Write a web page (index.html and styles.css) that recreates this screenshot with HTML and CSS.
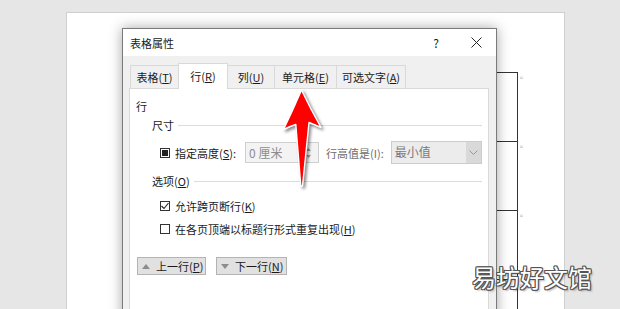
FILE: index.html
```html
<html>

<head>
  <meta name="viewport" content="width=device-width, initial-scale=1" />
  <link rel="stylesheet" href="styles.css">
  <title>表格属性</title>
</head>

<body>
  <div class="desk">
    <div class="page">
      <div class="doc-row">
        <div class="doc-cell"></div>
        <span class="row-mark">¤</span>
      </div>
      <div class="doc-row">
        <div class="doc-cell"></div>
        <span class="row-mark">¤</span>
      </div>
      <div class="doc-row">
        <div class="doc-cell"></div>
        <span class="row-mark">¤</span>
      </div>
      <div class="doc-row">
        <div class="doc-cell"></div>
        <span class="row-mark">¤</span>
      </div>
    </div>

    <div class="dialog">
      <div class="titlebar">
        <span class="title">表格属性</span>
        <span class="title-btn">?</span>
        <span class="title-btn">
          <svg width="11" height="11" viewBox="0 0 11 11">
            <path d="M0.5 0.5 L10.5 10.5 M10.5 0.5 L0.5 10.5" stroke="#222" stroke-width="1" fill="none" />
          </svg>
        </span>
      </div>

      <div class="tabs">
        <div class="tab">表格(<u>T</u>)</div>
        <div class="tab active">行(<u>R</u>)</div>
        <div class="tab">列(<u>U</u>)</div>
        <div class="tab">单元格(<u>E</u>)</div>
        <div class="tab">可选文字(<u>A</u>)</div>
      </div>

      <div class="panel">
        <div class="section">行</div>

        <div class="group-head">
          <span>尺寸</span>
          <span class="group-line"></span>
        </div>

        <div class="control-row">
          <span class="box mixed"></span>
          <span class="label">指定高度(<u>S</u>):</span>
          <div class="spin">
            <span class="spin-text">0 厘米</span>
            <span class="spin-btns">
              <svg width="7" height="14" viewBox="0 0 7 14">
                <path d="M1 5 L3.5 2 L6 5 Z M1 9 L3.5 12 L6 9 Z" fill="#9a9a9a" />
              </svg>
            </span>
          </div>
          <span class="label muted">行高值是(I):</span>
          <div class="select">
            <span class="select-text">最小值</span>
            <span class="select-btn">
              <svg width="9" height="6" viewBox="0 0 9 6">
                <path d="M0.5 0.5 L4.5 4.5 L8.5 0.5" stroke="#9a9a9a" stroke-width="1" fill="none" />
              </svg>
            </span>
          </div>
        </div>

        <div class="group-head options">
          <span>选项(<u>O</u>)</span>
          <span class="group-line"></span>
        </div>

        <div class="check-row first">
          <span class="box">
            <svg width="8" height="8" viewBox="0 0 8 8">
              <path d="M0.5 4 L3 6.5 L7.5 1" stroke="#222" stroke-width="1.1" fill="none" />
            </svg>
          </span>
          <span class="label">允许跨页断行(<u>K</u>)</span>
        </div>

        <div class="check-row">
          <span class="box"></span>
          <span class="label">在各页顶端以标题行形式重复出现(<u>H</u>)</span>
        </div>

        <div class="nav-buttons">
          <div class="nav-btn prev">
            <svg width="8" height="5" viewBox="0 0 8 5">
              <path d="M0 5 L4 0 L8 5 Z" fill="#8c8c8c" />
            </svg>
            <span>上一行(<u>P</u>)</span>
          </div>
          <div class="nav-btn next">
            <svg width="8" height="5" viewBox="0 0 8 5">
              <path d="M0 0 L8 0 L4 5 Z" fill="#8c8c8c" />
            </svg>
            <span>下一行(<u>N</u>)</span>
          </div>
        </div>
      </div>
    </div>

    <!-- red pointer drawn over the screenshot -->
    <svg class="pointer" width="60" height="110" viewBox="270 85 60 110">
      <path d="M301.5 90 Q310 108 321 127.5 Q314 124.5 309 122.5 L302.5 186 L300.8 186 L295.8 124.5 Q289.5 126.5 283.5 129.5 Q293 110 301.5 90 Z"
        fill="#ff0000" stroke="#fff" stroke-width="1.4" stroke-linejoin="round" />
    </svg>

    <div class="watermark">易坊好文馆</div>
  </div>
</body>

</html>
```

FILE: styles.css
```css
* {
  box-sizing: border-box;
}

body {
  margin: 0;
  background-color: #e6e6e6;
  font-family: "Noto Sans CJK SC", "Noto Sans", sans-serif;
  font-size: 11px;
  color: #1a1a1a;
  overflow: hidden;
}

u {
  text-underline-offset: 1px;
}

.desk {
  position: relative;
  width: 620px;
  height: 309px;
  overflow: hidden;
}

/* word page behind the dialog */

.page {
  margin: 12px 0 0 66px;
  width: 499px;
  height: 320px;
  padding-top: 59px;
  background-color: #fff;
  border: 1px solid #cfcfcf;
}

.doc-row {
  display: flex;
  height: 69px;
}

.doc-cell {
  margin-left: 80px;
  width: 371px;
  border: 1px solid #333;
  border-bottom: none;
}

.row-mark {
  padding: 3px 0 0 2px;
  font-size: 5px;
  line-height: 6px;
  color: #b0b0b0;
}

/* dialog window */

.dialog {
  position: absolute;
  left: 122px;
  top: 28px;
  width: 375px;
  height: 300px;
  background-color: #f0f0f0;
  border: 1px solid #7a7a7a;
  box-shadow: 0 0 12px rgba(0, 0, 0, 0.35);
}

.titlebar {
  display: flex;
  align-items: center;
  height: 27px;
  padding-left: 7px;
  background-color: #fff;
}

.title {
  flex: 1;
  font-size: 11px;
}

.title-btn {
  display: flex;
  align-items: center;
  justify-content: center;
  width: 40px;
  font-size: 12px;
  color: #222;
}

.tabs {
  display: flex;
  align-items: flex-end;
  height: 25px;
  margin-top: 7px;
  padding-left: 7px;
}

.tab {
  display: flex;
  align-items: center;
  justify-content: center;
  height: 23px;
  white-space: nowrap;
  border: 1px solid #d9d9d9;
  border-bottom: none;
  border-right: none;
  background-color: #f0f0f0;
}

.tab:last-child {
  border-right: 1px solid #d9d9d9;
}

.tab:nth-child(1) { width: 48px; }
.tab:nth-child(2) { width: 50px; }
.tab:nth-child(3) { width: 46px; }
.tab:nth-child(4) { width: 62px; }
.tab:nth-child(5) { width: 70px; }

.tab.active {
  position: relative;
  height: 26px;
  margin-bottom: -1px;
  background-color: #fff;
  border-right: 1px solid #d9d9d9;
  padding-bottom: 2px;
}

.tab.active + .tab {
  border-left: none;
}

.panel {
  height: 240px;
  margin: 0 7px 0 6px;
  padding: 10px 6px 0 6px;
  background-color: #fff;
  border: 1px solid #d9d9d9;
  line-height: 14px;
}

.group-head {
  display: flex;
  align-items: center;
  margin: 5px 0 0 16px;
}

.group-head.options {
  margin-top: 10px;
}

.group-line {
  flex: 1;
  margin-left: 4px;
  border-top: 1px solid #dcdcdc;
}

.control-row {
  display: flex;
  align-items: center;
  height: 23px;
  margin: 9px 0 0 24px;
}

.box {
  display: flex;
  flex-shrink: 0;
  align-items: center;
  justify-content: center;
  width: 10px;
  height: 10px;
  border: 1px solid #333;
  background-color: #fff;
}

.box.mixed {
  padding: 1px;
  background-color: #222;
  background-clip: content-box;
}

.label {
  flex-shrink: 0;
  margin-left: 5px;
  white-space: nowrap;
}

.label.muted {
  margin-left: 7px;
  color: #6d6d6d;
}

.spin {
  display: flex;
  flex-shrink: 0;
  width: 74px;
  height: 21px;
  margin-left: 9px;
  border: 1px solid #cfcfcf;
  background-color: #f3f3f3;
}

.spin-text {
  flex: 1;
  padding: 3px 0 0 3px;
  white-space: nowrap;
  font-size: 12px;
  color: #8c8c8c;
}

.spin-btns {
  display: flex;
  align-items: center;
  justify-content: center;
  width: 20px;
}

.select {
  display: flex;
  flex: 1;
  height: 23px;
  margin-left: 7px;
  border: 1px solid #cccccc;
  background-color: #ececec;
}

.select-text {
  flex: 1;
  padding: 3px 0 0 3px;
  white-space: nowrap;
  font-size: 12px;
  color: #7a7a7a;
}

.select-btn {
  display: flex;
  align-items: center;
  justify-content: center;
  width: 15px;
  background-color: #d9d9d9;
}

.check-row {
  display: flex;
  align-items: center;
  margin: 9px 0 0 24px;
}

.check-row.first {
  margin-top: 11px;
}

.nav-buttons {
  display: flex;
  gap: 10px;
  margin: 21px 0 0 1px;
}

.nav-btn {
  display: flex;
  align-items: center;
  gap: 6px;
  height: 18px;
  padding-left: 4px;
  white-space: nowrap;
  background-color: #e1e1e1;
  border: 1px solid #b4b4b4;
}

.nav-btn.prev { width: 69px; }
.nav-btn.next { width: 71px; }

/* overlays */

.pointer {
  position: absolute;
  left: 270px;
  top: 85px;
  filter: drop-shadow(2px 2px 1.5px rgba(0, 0, 0, 0.45));
}

.watermark {
  position: absolute;
  left: 472px;
  top: 262px;
  font-size: 24px;
  line-height: 30px;
  color: #fff;
  text-shadow: 1px 0 #555, -1px 0 #555, 0 1px #555, 0 -1px #555,
    1px 1px #555, -1px -1px #555, 1px -1px #555, -1px 1px #555,
    2px 2px 2px rgba(0, 0, 0, 0.3);
}
```
